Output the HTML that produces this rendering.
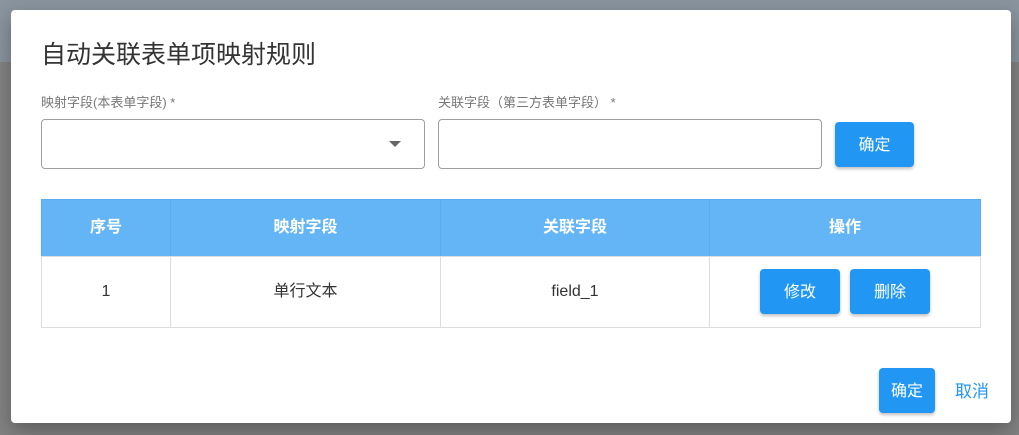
<!DOCTYPE html>
<html><head><meta charset="utf-8"><style>
body{margin:0;width:1019px;height:435px;overflow:hidden;background:#7d7d7d;font-family:"Liberation Sans","Noto Sans CJK SC",sans-serif;position:relative}
.bgtop{position:absolute;left:0;top:0;width:1019px;height:62px;background:#8a949e}
.bgl{position:absolute;left:0;top:62px;width:1019px;height:373px;background:#838383}
.dlg{position:absolute;left:11px;top:10px;width:1000px;height:413px;background:#fff;border-radius:4px;box-shadow:0 8px 20px rgba(0,0,0,.3)}
.a{position:absolute;box-sizing:border-box}
.t{left:30px;top:28px;font-size:25px;color:#333;line-height:34px}
.lbl{font-size:13px;color:#777;top:85px;line-height:16px}
.inp{border:1px solid #9e9e9e;border-radius:4px;height:50px;top:109px}
.btn{background:#2196f3;color:#fff;border-radius:4px;display:flex;align-items:center;justify-content:center;font-size:16px;box-shadow:0 2px 3px rgba(0,0,0,.25);padding-bottom:4px}
.c{display:flex;align-items:center;justify-content:center;font-size:16px;color:#333;border:1px solid #ddd;line-height:20px}
.h{background:#64b5f6;color:#fff;border-color:#58acf0;font-weight:bold;top:189px;height:58px}
.r{top:246px;height:72px}
</style></head><body>
<div class="bgtop"></div><div class="bgl"></div>
<div class="dlg">
<div class="a t">自动关联表单项映射规则</div>
<div class="a lbl" style="left:30px">映射字段(本表单字段) *</div>
<div class="a lbl" style="left:427px">关联字段（第三方表单字段） *</div>
<div class="a inp" style="left:30px;width:384px"></div>
<div class="a" style="left:378px;top:131px;width:0;height:0;border-left:6px solid transparent;border-right:6px solid transparent;border-top:6px solid #666"></div>
<div class="a inp" style="left:427px;width:384px"></div>
<div class="a btn" style="left:824px;top:112px;width:79px;height:45px">确定</div>
<div class="a c h" style="left:30px;width:130px">序号</div>
<div class="a c h" style="left:159px;width:271px">映射字段</div>
<div class="a c h" style="left:429px;width:270px">关联字段</div>
<div class="a c h" style="left:698px;width:272px">操作</div>
<div class="a c r" style="left:30px;width:130px">1</div>
<div class="a c r" style="left:159px;width:271px">单行文本</div>
<div class="a c r" style="left:429px;width:270px">field_1</div>
<div class="a c r" style="left:698px;width:272px"></div>
<div class="a btn" style="left:749px;top:259px;width:80px;height:45px">修改</div>
<div class="a btn" style="left:839px;top:259px;width:80px;height:45px">删除</div>
<div class="a btn" style="left:868px;top:358px;width:56px;height:45px">确定</div>
<div class="a" style="left:944px;top:367px;font-size:17px;color:#2196f3">取消</div>
</div>
</body></html>
